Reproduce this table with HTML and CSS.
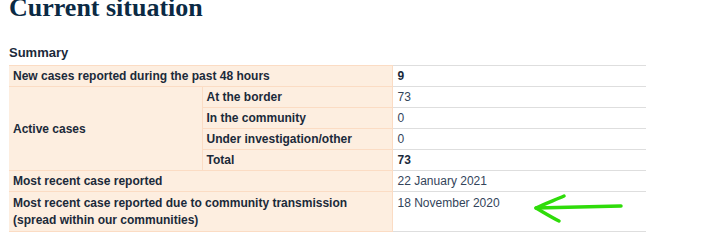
FILE: index.html
```html
<!DOCTYPE html>
<html lang="en">
<head>
<meta charset="utf-8">
<title>Current situation</title>
<link rel="stylesheet" href="styles.css">
</head>
<body>
<main class="page">
  <h1 class="title">Current situation</h1>
  <table class="summary">
    <caption class="caption">Summary</caption>
    <colgroup>
      <col class="c1"><col class="c2"><col class="c3">
    </colgroup>
    <tbody>
      <tr>
        <th colspan="2">New cases reported during the past 48 hours</th>
        <td class="strong">9</td>
      </tr>
      <tr>
        <th rowspan="4">Active cases</th>
        <th class="sub">At the border</th>
        <td>73</td>
      </tr>
      <tr>
        <th class="sub">In the community</th>
        <td>0</td>
      </tr>
      <tr>
        <th class="sub">Under investigation/other</th>
        <td>0</td>
      </tr>
      <tr>
        <th class="sub">Total</th>
        <td class="strong">73</td>
      </tr>
      <tr>
        <th colspan="2">Most recent case reported</th>
        <td>22 January 2021</td>
      </tr>
      <tr class="tall">
        <th colspan="2">Most recent case reported due to community transmission<br>(spread within our communities)</th>
        <td class="marked">18 November 2020
          <svg class="arrow" width="100" height="40" viewBox="0 0 100 40" aria-hidden="true">
            <path d="M5 16 C 30 15.5, 60 14.5, 90 14" fill="none" stroke="#2fdc0a" stroke-width="3.5" stroke-linecap="round"/>
            <path d="M33 4 C 24 8, 13 12, 5 16 C 12 20, 20 25, 28 29" fill="none" stroke="#2fdc0a" stroke-width="3.5" stroke-linecap="round" stroke-linejoin="round"/>
          </svg>
        </td>
      </tr>
    </tbody>
  </table>
</main>
</body>
</html>
```
FILE: styles.css
```css
html, body {
  margin: 0;
  padding: 0;
  background: #ffffff;
}
.page {
  padding: 0 9px;
}
.title {
  font-family: "Liberation Serif", "Times New Roman", serif;
  font-weight: bold;
  font-size: 26px;
  line-height: 28px;
  color: #0b2a44;
  margin: -6px 0 0 0;
}
.summary {
  border-collapse: collapse;
  font-family: "Liberation Sans", Arial, sans-serif;
  font-size: 12px;
  line-height: 15px;
  width: 637px;
  table-layout: fixed;
  margin-top: 23px;
}
.caption {
  caption-side: top;
  text-align: left;
  font-weight: bold;
  font-size: 13px;
  line-height: 16px;
  color: #1b2a3a;
  padding-bottom: 4px;
}
.c1 { width: 193px; }
.c2 { width: 190px; }
.c3 { width: 254px; }
.summary th {
  background: #fdeee0;
  color: #1b2a3a;
  font-weight: bold;
  text-align: left;
  padding: 3px 4px 2px 4px;
  border: 1px solid #fbdcc4;
  border-left: none;
}
.summary td {
  color: #33445a;
  padding: 3px 4px 2px 5px;
  border-top: 1px solid #dedede;
  border-bottom: 1px solid #dedede;
  border-left: 1px solid #fbdcc4;
}
.summary td.strong {
  font-weight: bold;
  color: #1b2a3a;
}
.summary .tall th,
.summary .tall td {
  line-height: 17px;
  vertical-align: top;
  padding-top: 3px;
  padding-bottom: 2px;
}
.summary .tall th {
  vertical-align: middle;
}
.summary td.marked {
  position: relative;
}
.arrow {
  position: absolute;
  left: 138px;
  top: 0;
}
```
